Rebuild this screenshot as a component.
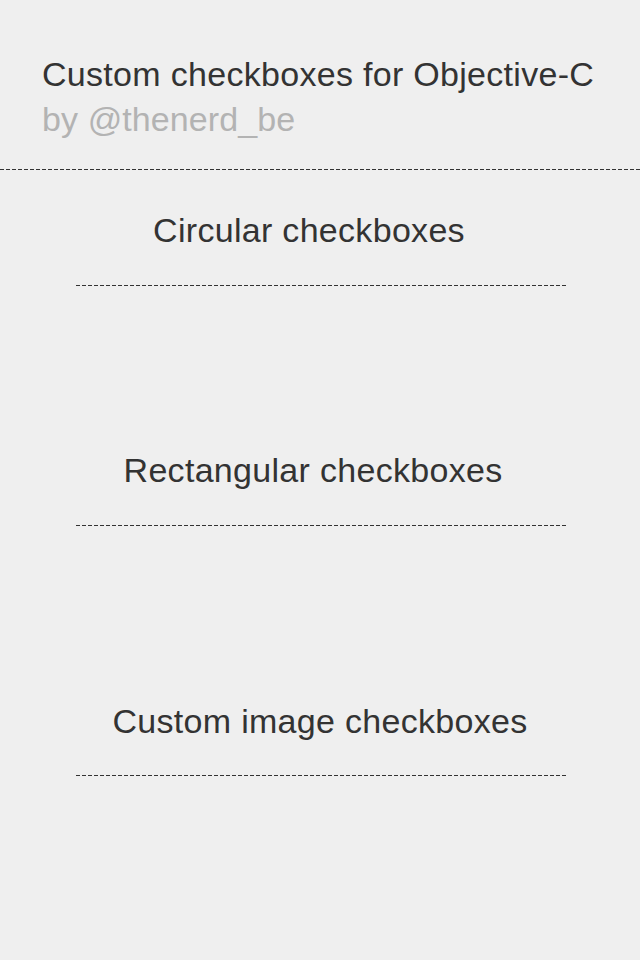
const dash =
  "h-px bg-[repeating-linear-gradient(to_right,#333333_0px,#333333_4px,transparent_4px,transparent_6px)]";

const Section = ({
  title,
  className,
  titleClass,
  lineGap,
}: {
  title: string;
  className: string;
  titleClass: string;
  lineGap: string;
}) => (
  <div className={className}>
    <h2 className={`text-center text-[34px] leading-[40px] tracking-[0.3px] text-[#333333] ${titleClass}`}>
      {title}
    </h2>
    <div className={`ml-[76px] w-[490px] ${lineGap} ${dash}`} />
  </div>
);

export default function App() {
  return (
    <div className="h-[960px] w-[640px] bg-[#efefef] font-['Liberation_Sans',sans-serif]">
      <div className="px-[42px] pt-[52px]">
        <h1 className="text-[34px] leading-[45px] tracking-[0.3px] text-[#333333]">
          Custom checkboxes for Objective-C
        </h1>
        <p className="text-[34px] leading-[45px] tracking-[0.1px] text-[#b3b3b3]">by @thenerd_be</p>
      </div>
      <div className={`mt-[27px] ${dash}`} />
      <Section title="Circular checkboxes" className="pt-[40px]" titleClass="pr-[22px]" lineGap="mt-[35px]" />
      <Section title="Rectangular checkboxes" className="pt-[164px]" titleClass="pr-[14px]" lineGap="mt-[35px]" />
      <Section title="Custom image checkboxes" className="pt-[175px]" titleClass="" lineGap="mt-[34px]" />
    </div>
  );
}
